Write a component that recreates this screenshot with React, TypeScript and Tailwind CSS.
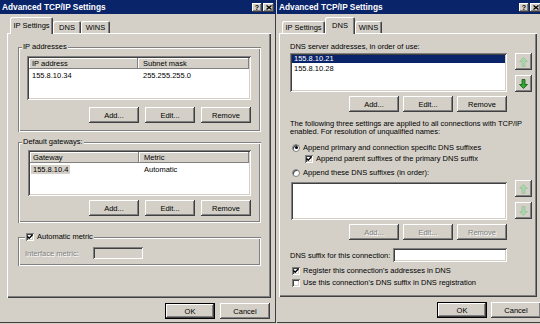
import React from 'react'

// classic 3D edges, drawn with inset shadows so they take no room
const raised = 'shadow-[inset_-1px_-1px_0_#404040,inset_1px_1px_0_#ffffff,inset_-2px_-2px_0_#808080]'
const raisedDefault =
  'shadow-[inset_0_0_0_1px_#000000,inset_-2px_-2px_0_#404040,inset_2px_2px_0_#ffffff,inset_-3px_-3px_0_#808080]'
const sunken =
  'shadow-[inset_1px_1px_0_#808080,inset_-1px_-1px_0_#ffffff,inset_2px_2px_0_#404040,inset_-2px_-2px_0_#d4d0c8]'
const etched =
  'shadow-[inset_1px_1px_0_#808080,inset_2px_2px_0_#ffffff,inset_-1px_-1px_0_#ffffff,inset_-2px_-2px_0_#808080]'
const header = 'shadow-[inset_-1px_-1px_0_#808080,inset_1px_1px_0_#ffffff]'
const disabledText = 'text-[#808080] [text-shadow:1px_1px_0_#ffffff]'

function TitleBar() {
  return (
    <div className="h-[14px] bg-[#0a246a] flex items-center pl-[2px] pr-[2px]">
      <span className="text-[8.3px] font-bold text-white leading-[10px]">Advanced TCP/IP Settings</span>
      <div className="ml-auto flex gap-[1px]">
        <div className={`w-[10px] h-[9px] bg-[#d4d0c8] ${raised} flex items-center justify-center`}>
          <span className="text-[7px] font-bold leading-[7px]">?</span>
        </div>
        <div className={`w-[11px] h-[9px] bg-[#d4d0c8] ${raised} flex items-center justify-center`}>
          <svg width="6" height="5" viewBox="0 0 6 5">
            <path d="M0.5 0.5 L5.5 4.5 M5.5 0.5 L0.5 4.5" stroke="#000" strokeWidth="1.3" />
          </svg>
        </div>
      </div>
    </div>
  )
}

type Tab = { label: string; w: string }

function TabRow({ tabs, active }: { tabs: Tab[]; active: number }) {
  return (
    <div className="relative z-10 flex items-end h-[16px] pl-[3px]">
      {tabs.map((t, i) =>
        i === active ? (
          <div
            key={t.label}
            className={`${t.w} h-[17px] -mb-[1px] bg-[#d4d0c8] rounded-t-[2px] shadow-[inset_1px_1px_0_#ffffff,inset_-1px_0_0_#404040,inset_-2px_0_0_#808080] flex justify-center pt-[4px]`}
          >
            {t.label}
          </div>
        ) : (
          <div
            key={t.label}
            className={`${t.w} h-[12px] bg-[#d4d0c8] rounded-t-[2px] shadow-[inset_1px_1px_0_#ffffff,inset_-1px_0_0_#404040,inset_-2px_0_0_#808080] flex justify-center pt-[2px]`}
          >
            {t.label}
          </div>
        )
      )}
    </div>
  )
}

function Btn({
  children,
  w = 'w-[50px]',
  disabled,
  isDefault,
}: {
  children: React.ReactNode
  w?: string
  disabled?: boolean
  isDefault?: boolean
}) {
  return (
    <div
      className={`${w} h-[16px] bg-[#d4d0c8] ${isDefault ? raisedDefault : raised} flex items-center justify-center ${
        disabled ? disabledText : ''
      }`}
    >
      {children}
    </div>
  )
}

function Check({ checked }: { checked?: boolean }) {
  return (
    <div className={`w-[8px] h-[8px] bg-white ${sunken} flex items-center justify-center shrink-0`}>
      {checked && (
        <svg width="6" height="6" viewBox="0 0 6 6">
          <path d="M0.5 2.5 L2.2 4.3 L5.5 0.8" stroke="#000" strokeWidth="1.4" fill="none" />
        </svg>
      )}
    </div>
  )
}

function Radio({ checked }: { checked?: boolean }) {
  return (
    <div className="w-[8px] h-[8px] rounded-full bg-white border border-[#808080] shadow-[inset_1px_1px_0_#404040] flex items-center justify-center shrink-0">
      {checked && <div className="w-[3px] h-[3px] rounded-full bg-black" />}
    </div>
  )
}

function Arrow({ up, dim }: { up?: boolean; dim?: boolean }) {
  return (
    <div className={`w-[17px] h-[17px] bg-[#d4d0c8] ${raised} flex items-center justify-center`}>
      <svg width="9" height="10" viewBox="0 0 9 10" className={up ? '' : 'rotate-180'}>
        <path
          d="M4.5 0.5 L8.5 4.5 L6 4.5 L6 9.5 L3 9.5 L3 4.5 L0.5 4.5 Z"
          fill={dim ? '#a8d8a8' : '#2fa82f'}
          stroke={dim ? '#9cc09c' : '#0d5a0d'}
          strokeWidth="0.8"
        />
      </svg>
    </div>
  )
}

function GroupLabel({ children, ml = 'ml-[4px]' }: { children: React.ReactNode; ml?: string }) {
  return <div className={`-mt-[5px] ${ml} px-[1px] w-fit h-[9px] bg-[#d4d0c8] flex items-center gap-[3px]`}>{children}</div>
}

function ListView({
  cols,
  row,
  selected,
  ml,
  w,
  h,
}: {
  cols: string[]
  row: string[]
  selected?: boolean
  ml: string
  w: string
  h: string
}) {
  return (
    <div className={`${ml} ${w} ${h} bg-white ${sunken} p-[2px] flex flex-col`}>
      <div className="flex h-[11px] shrink-0">
        <div className={`w-[109px] bg-[#d4d0c8] ${header} pl-[3px] leading-[11px]`}>{cols[0]}</div>
        <div className={`flex-1 bg-[#d4d0c8] ${header} pl-[5px] leading-[11px]`}>{cols[1]}</div>
      </div>
      <div className="flex mt-[2px] leading-[9px]">
        <div className="w-[109px] pl-[1px]">
          <span className={`px-[2px] ${selected ? 'bg-[#d4d0c8]' : ''}`}>{row[0]}</span>
        </div>
        <div className="pl-[5px]">{row[1]}</div>
      </div>
    </div>
  )
}

function Footer({ pr }: { pr: string }) {
  return (
    <div className={`flex justify-end gap-[5px] ${pr} mt-[5px]`}>
      <Btn isDefault>OK</Btn>
      <Btn>Cancel</Btn>
    </div>
  )
}

const tabsLeft: Tab[] = [
  { label: 'IP Settings', w: 'w-[43px]' },
  { label: 'DNS', w: 'w-[28px]' },
  { label: 'WINS', w: 'w-[29px]' },
]
const tabsRight: Tab[] = [
  { label: 'IP Settings', w: 'w-[43px]' },
  { label: 'DNS', w: 'w-[30px]' },
  { label: 'WINS', w: 'w-[27px]' },
]

const panel = 'bg-[#d4d0c8] shadow-[inset_1px_1px_0_#ffffff,inset_-1px_-1px_0_#404040,inset_-2px_-2px_0_#808080]'

function IpSettingsDialog() {
  return (
    <div className="w-[276px] h-[323px] shrink-0 bg-[#d4d0c8] flex flex-col shadow-[inset_-1px_-1px_0_#404040]">
      <TitleBar />
      <div className="pl-[7px] pr-[5px] pt-[3px]">
        <TabRow tabs={tabsLeft} active={0} />
        <div className={`h-[265px] ${panel} flex flex-col pt-[14px] pl-[11px]`}>
          {/* IP addresses */}
          <div className={`w-[243px] h-[85px] ${etched} flex flex-col`}>
            <GroupLabel>IP addresses</GroupLabel>
            <div className="mt-[5px]">
              <ListView
                cols={['IP address', 'Subnet mask']}
                row={['155.8.10.34', '255.255.255.0']}
                ml="ml-[9px]"
                w="w-[224px]"
                h="h-[44px]"
              />
            </div>
            <div className="mt-[7px] ml-[9px] w-[224px] flex justify-end gap-[6px]">
              <Btn>Add...</Btn>
              <Btn>Edit...</Btn>
              <Btn>Remove</Btn>
            </div>
          </div>

          {/* Default gateways */}
          <div className={`mt-[10px] w-[243px] h-[81px] ${etched} flex flex-col`}>
            <GroupLabel>Default gateways:</GroupLabel>
            <div className="mt-[4px]">
              <ListView
                cols={['Gateway', 'Metric']}
                row={['155.8.10.4', 'Automatic']}
                selected
                ml="ml-[10px]"
                w="w-[223px]"
                h="h-[46px]"
              />
            </div>
            <div className="mt-[4px] ml-[9px] w-[224px] flex justify-end gap-[6px]">
              <Btn>Add...</Btn>
              <Btn>Edit...</Btn>
              <Btn>Remove</Btn>
            </div>
          </div>

          {/* Automatic metric */}
          <div className={`mt-[14px] w-[243px] h-[29px] ${etched} flex flex-col`}>
            <GroupLabel ml="ml-[7px]">
              <Check checked />
              <span>Automatic metric</span>
            </GroupLabel>
            <div className="mt-[6px] ml-[7px] flex items-center h-[12px]">
              <span className={`w-[68px] ${disabledText}`}>Interface metric:</span>
              <div className={`w-[50px] h-[12px] bg-[#d4d0c8] ${sunken}`} />
            </div>
          </div>
        </div>
      </div>
      <Footer pr="pr-[6px]" />
    </div>
  )
}

function DnsDialog() {
  return (
    <div className="ml-[1px] w-[266px] h-[323px] shrink-0 bg-[#d4d0c8] flex flex-col shadow-[inset_-1px_-1px_0_#404040]">
      <TitleBar />
      <div className="pl-[2px] pr-[6px] pt-[3px]">
        <TabRow tabs={tabsRight} active={1} />
        <div className={`h-[264px] ${panel} flex flex-col pl-[11px]`}>
          <div className="mt-[9px] leading-[9px]">DNS server addresses, in order of use:</div>

          <div className="mt-[2px] flex">
            <div className={`w-[217px] h-[39px] bg-white ${sunken} p-[2px] leading-[8px]`}>
              <div className="bg-[#0a246a] text-white pl-[2px] h-[8px] mt-[0px]">155.8.10.21</div>
              <div className="pl-[2px] mt-[2px]">155.8.10.28</div>
            </div>
            <div className="ml-[8px] flex flex-col gap-[5px]">
              <Arrow up dim />
              <Arrow />
            </div>
          </div>

          <div className="mt-[4px] w-[217px] flex justify-end gap-[4px]">
            <Btn>Add...</Btn>
            <Btn>Edit...</Btn>
            <Btn>Remove</Btn>
          </div>

          <div className="mt-[8px] leading-[8px]">
            The following three settings are applied to all connections with TCP/IP
            <br />
            enabled. For resolution of unqualified names:
          </div>

          <div className="mt-[7px] ml-[2px] h-[9px] flex items-center gap-[3px]">
            <Radio checked />
            <span>Append primary and connection specific DNS suffixes</span>
          </div>
          <div className="mt-[2px] ml-[15px] h-[9px] flex items-center gap-[3px]">
            <Check checked />
            <span>Append parent suffixes of the primary DNS suffix</span>
          </div>
          <div className="mt-[5px] ml-[2px] h-[9px] flex items-center gap-[3px]">
            <Radio />
            <span>Append these DNS suffixes (in order):</span>
          </div>

          <div className="mt-[3px] flex">
            <div className={`mt-[2px] ml-[1px] w-[216px] h-[38px] bg-white ${sunken}`} />
            <div className="ml-[8px] flex flex-col gap-[5px]">
              <Arrow up dim />
              <Arrow dim />
            </div>
          </div>

          <div className="mt-[4px] w-[217px] flex justify-end gap-[4px]">
            <Btn disabled>Add...</Btn>
            <Btn disabled>Edit...</Btn>
            <Btn disabled>Remove</Btn>
          </div>

          <div className="mt-[8px] w-[217px] flex items-center">
            <span>DNS suffix for this connection:</span>
            <div className={`ml-auto w-[114px] h-[14px] bg-white ${sunken}`} />
          </div>

          <div className="mt-[4px] ml-[2px] h-[9px] flex items-center gap-[3px]">
            <Check checked />
            <span>Register this connection's addresses in DNS</span>
          </div>
          <div className="mt-[3px] ml-[2px] h-[9px] flex items-center gap-[3px]">
            <Check />
            <span>Use this connection's DNS suffix in DNS registration</span>
          </div>
        </div>
      </div>
      <div className="flex gap-[4px] pl-[160px] mt-[5px]">
        <Btn isDefault>OK</Btn>
        <Btn>Cancel</Btn>
      </div>
    </div>
  )
}

export default function App() {
  return (
    <div className="w-[540px] h-[324px] overflow-hidden flex bg-[#d4d0c8] font-['Liberation_Sans',Arial,sans-serif] text-[7.5px] leading-[9px] text-black">
      <IpSettingsDialog />
      <DnsDialog />
    </div>
  )
}
